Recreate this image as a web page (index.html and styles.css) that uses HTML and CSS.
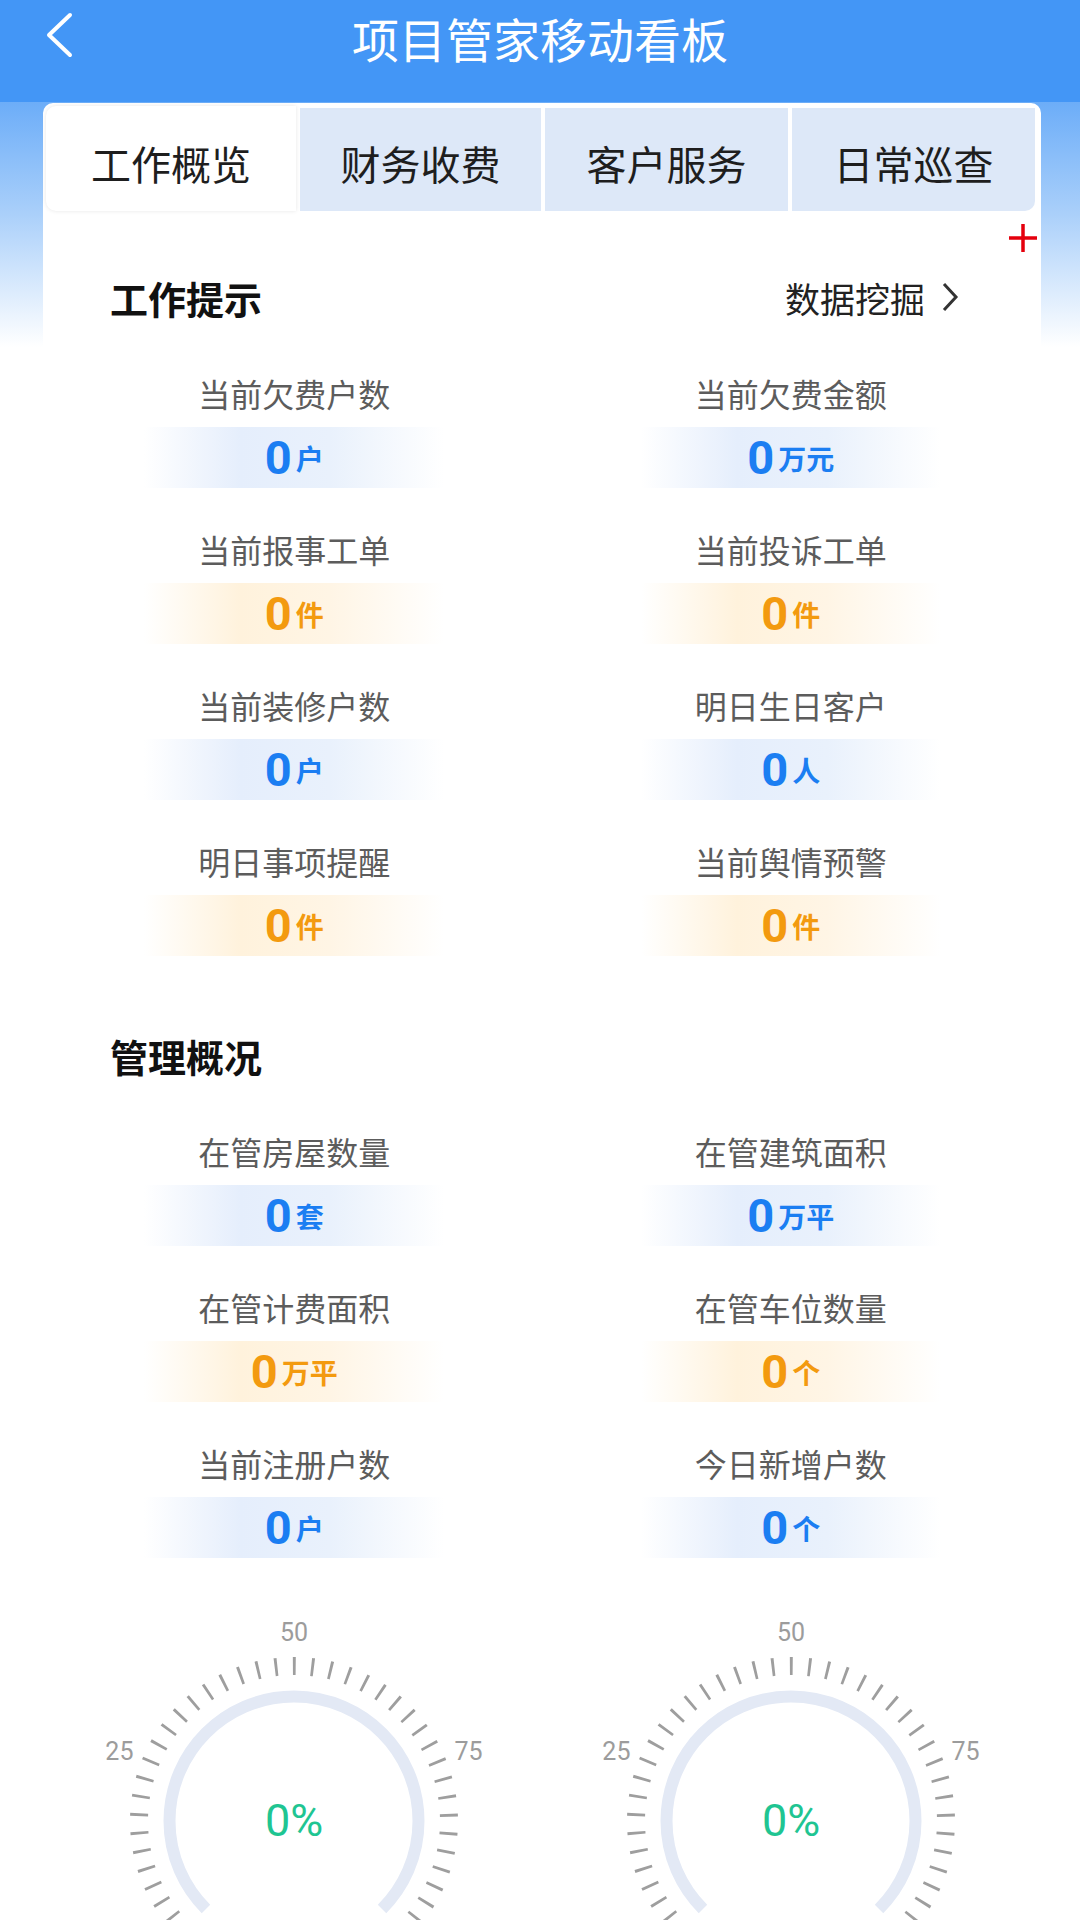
FILE: index.html
```html
<!DOCTYPE html>
<html lang="zh-CN">
<head>
<meta charset="utf-8">
<title>项目管家移动看板</title>
<link rel="stylesheet" href="styles.css">
</head>
<body>
<header class="topbar">
  <div class="topbar-left">
    <svg class="back" width="30" height="46" viewBox="0 0 30 46"><path d="M24 3 L3 23 L24 43" fill="none" stroke="#fff" stroke-width="4" stroke-linecap="round" stroke-linejoin="round"/></svg>
  </div>
  <h1 class="title">项目管家移动看板</h1>
  <div></div>
</header>
<main class="page">
  <section class="card">
    <nav class="tabs">
      <div class="tab active">工作概览</div>
      <div class="tab">财务收费</div>
      <div class="tab">客户服务</div>
      <div class="tab last">日常巡查</div>
    </nav>
    <svg class="add" width="30" height="30" viewBox="0 0 30 30"><path d="M15 1 V29 M1 15 H29" stroke="#e5000d" stroke-width="3.5"/></svg>

    <div class="section-head">
      <h2>工作提示</h2>
      <div class="more">数据挖掘<svg width="18" height="30" viewBox="0 0 18 30"><path d="M3 2 L15 15 L3 28" fill="none" stroke="#333" stroke-width="3"/></svg></div>
    </div>
    <div class="stats">
      <div class="stat"><div class="label">当前欠费户数</div><div class="band blue"><span class="num">0</span><span class="unit">户</span></div></div>
      <div class="stat"><div class="label">当前欠费金额</div><div class="band blue"><span class="num">0</span><span class="unit">万元</span></div></div>
      <div class="stat"><div class="label">当前报事工单</div><div class="band orange"><span class="num">0</span><span class="unit">件</span></div></div>
      <div class="stat"><div class="label">当前投诉工单</div><div class="band orange"><span class="num">0</span><span class="unit">件</span></div></div>
      <div class="stat"><div class="label">当前装修户数</div><div class="band blue"><span class="num">0</span><span class="unit">户</span></div></div>
      <div class="stat"><div class="label">明日生日客户</div><div class="band blue"><span class="num">0</span><span class="unit">人</span></div></div>
      <div class="stat"><div class="label">明日事项提醒</div><div class="band orange"><span class="num">0</span><span class="unit">件</span></div></div>
      <div class="stat"><div class="label">当前舆情预警</div><div class="band orange"><span class="num">0</span><span class="unit">件</span></div></div>
    </div>

    <div class="section-head second">
      <h2>管理概况</h2>
    </div>
    <div class="stats">
      <div class="stat"><div class="label">在管房屋数量</div><div class="band blue"><span class="num">0</span><span class="unit">套</span></div></div>
      <div class="stat"><div class="label">在管建筑面积</div><div class="band blue"><span class="num">0</span><span class="unit">万平</span></div></div>
      <div class="stat"><div class="label">在管计费面积</div><div class="band orange"><span class="num">0</span><span class="unit">万平</span></div></div>
      <div class="stat"><div class="label">在管车位数量</div><div class="band orange"><span class="num">0</span><span class="unit">个</span></div></div>
      <div class="stat"><div class="label">当前注册户数</div><div class="band blue"><span class="num">0</span><span class="unit">户</span></div></div>
      <div class="stat"><div class="label">今日新增户数</div><div class="band blue"><span class="num">0</span><span class="unit">个</span></div></div>
    </div>

    <div class="gauges">
      <svg class="gauge" width="496" height="340" viewBox="0 0 496 340">
        <text class="g-label" x="248" y="31">50</text>
        <text class="g-label" x="73.4" y="150">25</text>
        <text class="g-label" x="422.6" y="150">75</text>
        <path class="g-ticks" d="M139.29 330.48 A155 155 0 1 1 356.71 330.48"/>
        <path class="g-arc" d="M159.97 308.03 A124.5 124.5 0 1 1 336.03 308.03"/>
        <text class="g-value" x="248" y="219">0%</text>
      </svg>
      <svg class="gauge" width="496" height="340" viewBox="0 0 496 340">
        <text class="g-label" x="248" y="31">50</text>
        <text class="g-label" x="73.4" y="150">25</text>
        <text class="g-label" x="422.6" y="150">75</text>
        <path class="g-ticks" d="M139.29 330.48 A155 155 0 1 1 356.71 330.48"/>
        <path class="g-arc" d="M159.97 308.03 A124.5 124.5 0 1 1 336.03 308.03"/>
        <text class="g-value" x="248" y="219">0%</text>
      </svg>
    </div>
  </section>
</main>
</body>
</html>
```

FILE: styles.css
```css
* { box-sizing: border-box; margin: 0; padding: 0; }
html, body { width: 1080px; height: 1920px; overflow: hidden; }
body {
  font-family: "Noto Sans CJK SC", "Noto Sans", sans-serif;
  background: #fff;
  color: #222;
}
.topbar {
  height: 102px;
  background: #4396f6;
  display: grid;
  grid-template-columns: 1fr auto 1fr;
  align-items: start;
}
.topbar-left { padding: 12px 0 0 46px; }
.back { display: block; }
.title {
  font-size: 47px;
  font-weight: 400;
  color: #fff;
  line-height: 76px;
}
.page {
  background: linear-gradient(to bottom, #6cadf8 0px, #a9cffa 110px, #ffffff 245px, #ffffff 100%);
  padding: 1px 39px 0 43px;
  height: 1818px;
}
.card {
  position: relative;
  background: #fff;
  border-radius: 10px 10px 0 0;
  padding: 3px 2px 0 3px;
  height: 100%;
}
.tabs {
  display: grid;
  grid-template-columns: 250px 241px 243px 243px;
  column-gap: 4px;
  height: 105px;
  padding-right: 4px;
}
.tab {
  background: #dde8f8;
  display: flex;
  align-items: center;
  justify-content: center;
  font-size: 40px;
  color: #1e1e1e;
  margin-top: 2px;
  padding-top: 7px;
}
.tab.active {
  background: #fff;
  border-radius: 10px 0 0 10px;
  box-shadow: 0 0 4px rgba(0,0,0,0.10);
  margin-top: 0;
  padding-top: 9px;
}
.tab.last { border-radius: 0 0 10px 0; }
.add {
  position: absolute;
  left: 965px;
  top: 120px;
}
.section-head {
  display: flex;
  align-items: center;
  justify-content: space-between;
  height: 50px;
  margin-top: 61px;
  padding: 0 80px 0 64px;
}
.section-head.second { margin-top: 74px; }
.section-head h2 {
  font-size: 38px;
  font-weight: 700;
  color: #111;
}
.more {
  display: flex;
  align-items: center;
  gap: 16px;
  font-size: 35px;
  color: #222;
}
.more svg { display: block; }
.stats {
  display: grid;
  grid-template-columns: 1fr 1fr;
  row-gap: 42px;
  margin-top: 52px;
}
.stat {
  display: flex;
  flex-direction: column;
  align-items: center;
  gap: 15px;
}
.label {
  font-size: 32px;
  line-height: 38px;
  color: #5c5c5c;
}
.band {
  width: 300px;
  height: 61px;
  display: flex;
  align-items: center;
  justify-content: center;
}
.band.blue {
  color: #1b7ef2;
  background: linear-gradient(90deg, rgba(231,240,253,0) 0%, #e5eefc 32%, #e9f1fc 62%, rgba(231,240,253,0) 100%);
}
.band.orange {
  color: #f39a0f;
  background: linear-gradient(90deg, rgba(255,244,226,0) 0%, #fff2dc 32%, #fff5e5 62%, rgba(255,244,226,0) 100%);
}
.num {
  font-family: Roboto, "Liberation Sans", sans-serif;
  font-weight: 700;
  font-size: 47px;
  line-height: 1;
}
.unit {
  font-size: 28px;
  font-weight: 700;
  margin-left: 4px;
  line-height: 1;
}
.gauges {
  display: grid;
  grid-template-columns: 1fr 1fr;
  margin-top: 43px;
  justify-items: center;
}
.gauge { display: block; overflow: visible; }
.g-label {
  font-family: Roboto, "Liberation Sans", sans-serif;
  font-size: 25px;
  fill: #9c9c9c;
  text-anchor: middle;
  dominant-baseline: central;
}
.g-ticks {
  fill: none;
  stroke: #9e9e9e;
  stroke-width: 18;
  stroke-dasharray: 2.8 15.4606;
}
.g-arc {
  fill: none;
  stroke: #e3e9f5;
  stroke-width: 12;
}
.g-value {
  font-family: Roboto, "Liberation Sans", sans-serif;
  font-size: 45px;
  fill: #1fc592;
  text-anchor: middle;
  dominant-baseline: central;
}
```
